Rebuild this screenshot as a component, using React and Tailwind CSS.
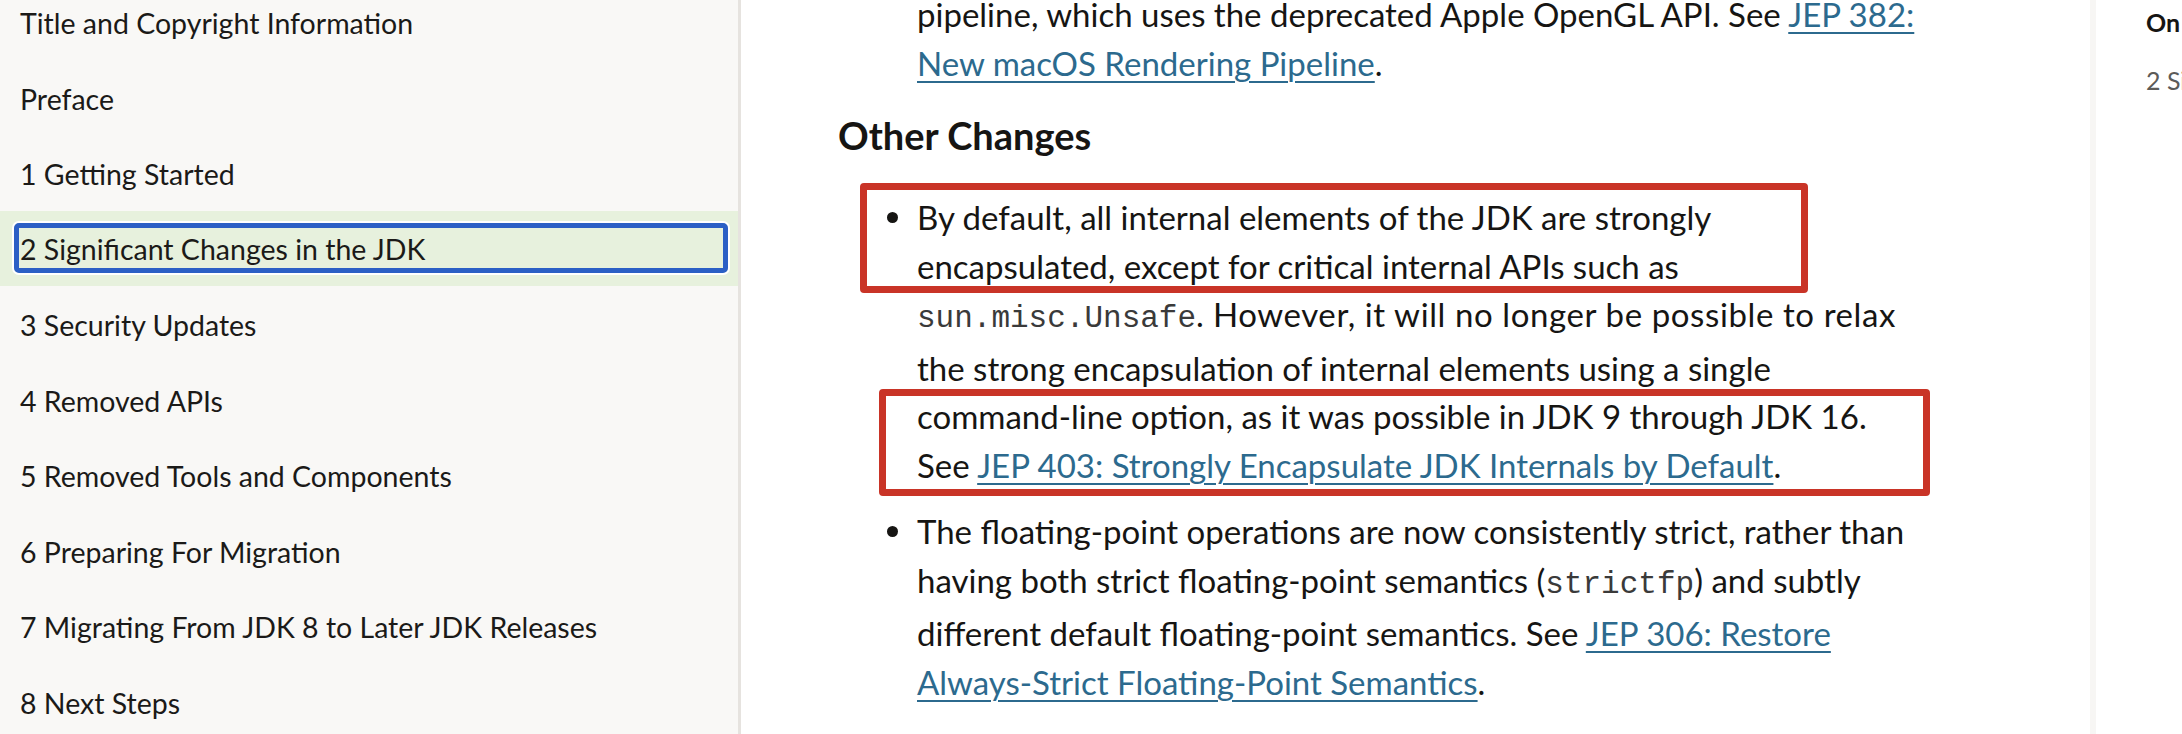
import React from 'react';

const navItems = [
  'Title and Copyright Information',
  'Preface',
  '1 Getting Started',
  '2 Significant Changes in the JDK',
  '3 Security Updates',
  '4 Removed APIs',
  '5 Removed Tools and Components',
  '6 Preparing For Migration',
  '7 Migrating From JDK 8 to Later JDK Releases',
  '8 Next Steps',
];

const font = { fontFamily: 'Lato, "Noto Sans", sans-serif' };

function Link({ children }) {
  return <a className="text-[#2c6a8e] underline decoration-[2px] underline-offset-[5px]">{children}</a>;
}

function Code({ children }) {
  return <code className="font-['Liberation_Mono',monospace] text-[31px] text-[#3a3a3a]">{children}</code>;
}

function Bullet() {
  return (
    <div className="w-[30px] shrink-0 h-[48.5px] flex items-center">
      <span className="block w-[11px] h-[11px] rounded-full bg-[#161513]" />
    </div>
  );
}

function Sidebar() {
  return (
    <aside className="w-[741px] shrink-0 h-full bg-[#f9f8f6] border-r-[3px] border-[#e6e3df] overflow-hidden">
      <ul className="-mt-[16px]">
        {navItems.map((item, i) =>
          i === 3 ? (
            <li key={item} className="h-[75.5px] bg-[#e7f1dd] pt-[12px]">
              <div className="ml-[14px] w-[714px] h-[50px] border-[5px] border-[#2b5fc5] rounded-[5px] shadow-[0_0_0_2px_white] pl-px pt-[6px] text-[28.5px] leading-[31px] text-[#1b1a18] whitespace-nowrap">
                {item}
              </div>
            </li>
          ) : (
            <li key={item} className="h-[75.5px] pl-[20px] pt-[24px] text-[28.5px] leading-[31px] text-[#1b1a18] whitespace-nowrap">
              {item}
            </li>
          )
        )}
      </ul>
    </aside>
  );
}

function Content() {
  return (
    <main className="relative flex-1 h-full bg-white overflow-hidden text-[33px] leading-[48.5px] text-[#161513]">
      <div className="pl-[176px] -mt-[10px] whitespace-nowrap">
        pipeline, which uses the deprecated Apple OpenGL API. See <Link>JEP 382:</Link>
        <br />
        <Link>New macOS Rendering Pipeline</Link>.
      </div>

      <h2 className="pl-[97px] mt-[28px] text-[38px] leading-[41px] font-bold">Other Changes</h2>

      <ul className="pl-[146px] mt-[37px] whitespace-nowrap">
        <li className="flex">
          <Bullet />
          <div>
            By default, all internal elements of the JDK are strongly
            <br />
            encapsulated, except for critical internal APIs such as
            <br />
            <Code>sun.misc.Unsafe</Code>.<span className="tracking-[0.6px]"> However, it will no longer be possible to relax</span>
            <br />
            the strong encapsulation of internal elements using a single
            <br />
            command-line option, as it was possible in JDK 9 through JDK 16.
            <br />
            See <Link>JEP 403: Strongly Encapsulate JDK Internals by Default</Link>.
          </div>
        </li>
        <li className="flex mt-[18px]">
          <Bullet />
          <div>
            The floating-point operations are now consistently strict, rather than
            <br />
            having both strict floating-point semantics (<Code>strictfp</Code>) and subtly
            <br />
            different default floating-point semantics. See <Link>JEP 306: Restore</Link>
            <br />
            <Link>Always-Strict Floating-Point Semantics</Link>.
          </div>
        </li>
      </ul>

      {/* annotation boxes drawn over the text */}
      <div className="absolute left-[119px] top-[183px] w-[948px] h-[110px] border-[7px] border-[#c93427] rounded-[4px] pointer-events-none" />
      <div className="absolute left-[138px] top-[389px] w-[1051px] h-[107px] border-[7px] border-[#c93427] rounded-[4px] pointer-events-none" />
    </main>
  );
}

export default function App() {
  return (
    <div className="flex w-[2182px] h-[734px] overflow-hidden bg-white" style={font}>
      <Sidebar />
      <Content />
      <aside className="w-[92px] shrink-0 h-full border-l-[6px] border-[#f7f6f4] pl-[50px] whitespace-nowrap overflow-hidden">
        <div className="mt-[5px] text-[25px] leading-[34px] font-bold text-[#161513]">On this Page</div>
        <div className="mt-[24px] text-[25px] leading-[34px] text-[#5c5b59]">2 Significant Changes in the JDK</div>
      </aside>
    </div>
  );
}
